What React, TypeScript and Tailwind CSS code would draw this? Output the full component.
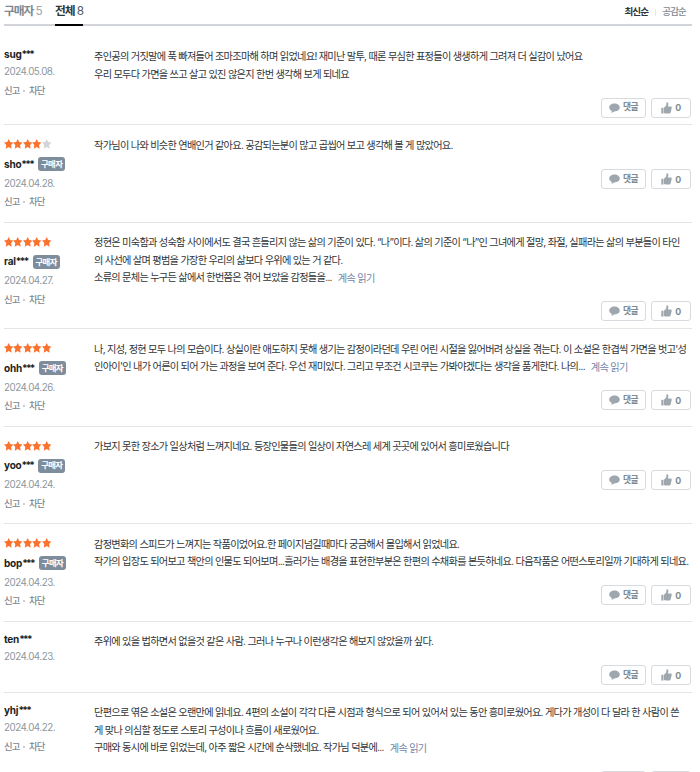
import clsx from "clsx";

interface Review {
  id: string;
  date: string;
  rating?: number;
  buyer?: boolean;
  reportable?: boolean;
  lines: string[];
  truncated?: boolean;
}

const REVIEWS: Review[] = [
  {
    id: "sug", date: "2024.05.08.", reportable: true,
    lines: [
      "주인공의 거짓말에 푹 빠져들어 조마조마해 하며 읽었네요! 재미난 말투, 때론 무심한 표정들이 생생하게 그려져 더 실감이 났어요",
      "우리 모두다 가면을 쓰고 살고 있진 않은지 한번 생각해 보게 되네요",
    ],
  },
  {
    id: "sho", date: "2024.04.28.", rating: 4, buyer: true, reportable: true,
    lines: ["작가님이 나와 비슷한 연배인거 같아요. 공감되는분이 많고 곱씹어 보고 생각해 볼 게 많았어요."],
  },
  {
    id: "ral", date: "2024.04.27.", rating: 5, buyer: true, reportable: true, truncated: true,
    lines: [
      "정현은 미숙함과 성숙함 사이에서도 결국 흔들리지 않는 삶의 기준이 있다. “나”이다. 삶의 기준이 “나”인 그녀에게 절망, 좌절, 실패라는 삶의 부분들이 타인",
      "의 사선에 살며 평범을 가장한 우리의 삶보다 우위에 있는 거 같다.",
      "소류의 문체는 누구든 삶에서 한번쯤은 겪어 보았을 감정들을...",
    ],
  },
  {
    id: "ohh", date: "2024.04.26.", rating: 5, buyer: true, reportable: true, truncated: true,
    lines: [
      "나, 지성, 정현 모두 나의 모습이다. 상실이란 애도하지 못해 생기는 감정이라던데 우린 어린 시절을 잃어버려 상실을 겪는다. 이 소설은 한겹씩 가면을 벗고'성",
      "인아이'인 내가 어른이 되어 가는 과정을 보여 준다. 우선 재미있다. 그리고 무조건 시코쿠는 가봐야겠다는 생각을 품게한다. 나의...",
    ],
  },
  {
    id: "yoo", date: "2024.04.24.", rating: 5, buyer: true, reportable: true,
    lines: ["가보지 못한 장소가 일상처럼 느껴지네요. 등장인물들의 일상이 자연스레 세계 곳곳에 있어서 흥미로웠습니다"],
  },
  {
    id: "bop", date: "2024.04.23.", rating: 5, buyer: true, reportable: true,
    lines: [
      "감정변화의 스피드가 느껴지는 작품이었어요.한 페이지넘길때마다 궁금해서 몰입해서 읽었네요.",
      "작가의 입장도 되어보고 책안의 인물도 되어보며...흘러가는 배경을 표현한부분은 한편의 수채화를 본듯하네요. 다음작품은 어떤스토리일까 기대하게 되네요.",
    ],
  },
  {
    id: "ten", date: "2024.04.23.",
    lines: ["주위에 있을 법하면서 없을것 같은 사람. 그러나 누구나 이런생각은 해보지 않았을까 싶다."],
  },
  {
    id: "yhj", date: "2024.04.22.", reportable: true, truncated: true,
    lines: [
      "단편으로 엮은 소설은 오랜만에 읽네요. 4편의 소설이 각각 다른 시점과 형식으로 되어 있어서 있는 동안 흥미로웠어요. 게다가 개성이 다 달라 한 사람이 쓴",
      "게 맞나 의심할 정도로 스토리 구성이나 흐름이 새로웠어요.",
      "구매와 동시에 바로 읽었는데, 아주 짧은 시간에 순삭했네요. 작가님 덕분에...",
    ],
  },
];

function Stars({ rating }: { rating: number }) {
  return (
    <div className="flex h-[15px] items-center">
      {[1, 2, 3, 4, 5].map((n) => (
        <svg key={n} width="9.4" height="10" viewBox="0 0 24 24" preserveAspectRatio="none"
          className={clsx("shrink-0", n <= rating ? "fill-[#fa722e]" : "fill-[#d1d5d9]")}>
          <path d="M12 0l3.8 7.3 8.2 1.3-5.9 5.9 1.4 8.7L12 19.4l-7.5 3.8 1.4-8.7L0 8.6l8.2-1.3z" />
        </svg>
      ))}
    </div>
  );
}

function CommentIcon() {
  return (
    <svg width="11" height="10" viewBox="0 0 11 10" className="fill-[#9ea7ad]">
      <path d="M5.5.5C2.5.5.2 2.2.2 4.5c0 1.4 1 2.7 2.6 3.4L2.6 9.900l2.5-1.500h.4c3 0 5.300-1.700 5.300-3.900S8.500.5 5.500.5z" />
    </svg>
  );
}

function ThumbIcon() {
  return (
    <svg width="11" height="12" viewBox="0 0 11 12" className="fill-[#9ea7ad]">
      <path d="M.3 5.8h2.2v5.7H.3z" />
      <path d="M3 5.8 5.2 3.5 5.5.6c.1-.5 1.9-.3 1.900 1.400L6.900 4.600h2.800c.8 0 1.200.6 1 1.300l-1.100 4.500c-.2.7-.6 1.100-1.300 1.100H4.500L3 10.900z" />
    </svg>
  );
}

function ReviewRow({ review }: { review: Review }) {
  const { id, date, rating, buyer, reportable, lines, truncated } = review;

  return (
    <li className={clsx("flex border-b border-[#e3e5e8] pt-[11.4px]", rating ? "min-h-[97.5px] pb-[7px]" : "pb-[6.55px]")}>
      <div className="w-[90px] shrink-0">
        {rating && <Stars rating={rating} />}
        <div className={clsx("flex items-center", rating ? "h-[25px]" : "-mt-px h-[15px]")}>
          <span className="text-[10px] font-bold tracking-[-0.2px] text-[#1c1f22]">
            {id}<span className="tracking-[-1.7px]">***</span>
          </span>
          {buyer && (
            <span className="ml-[5px] flex h-[14px] items-center rounded-[3px] bg-[#7e8d9c] px-[3px] text-[8.4px] font-bold tracking-[-0.65px] text-white">
              구매자
            </span>
          )}
        </div>
        <div className={clsx("flex items-center text-[9.8px] tracking-[-0.48px] text-[#8d979f]", rating ? "h-[15px]" : "h-5")}>{date}</div>
        {reportable && (
          <div className={clsx("flex items-center text-[9.4px] font-medium tracking-[-0.9px] text-[#808991]", rating ? "h-[21px]" : "h-[17px]")}>
            신고
            <i className="mr-[3.5px] ml-[4px] size-[2px] bg-[#c9ced3]" />
            차단
          </div>
        )}
      </div>

      <div className="min-w-0 flex-1">
        <div className="text-[10.2px] leading-[17.3px] tracking-[-0.725px] text-[#303538]">
          {lines.map((line, i) => (
            <p key={line} className="h-[17.3px] whitespace-nowrap">
              {line}
              {truncated && i === lines.length - 1 && (
                <span className="relative top-px ml-[6px] text-[#7285a6]">계속 읽기</span>
              )}
            </p>
          ))}
        </div>
        <div className="mt-[15px] flex justify-end gap-[5px] pr-px text-[8.8px] font-bold tracking-[-0.5px] text-[#808991]">
          <button className="flex h-5 w-[45px] items-center justify-center gap-[3px] rounded-[3px] border border-[#d7dade]">
            <CommentIcon />
            <span className="leading-none">댓글</span>
          </button>
          <button className="flex h-5 w-10 items-center justify-center gap-[3px] rounded-[3px] border border-[#d7dade]">
            <ThumbIcon />0
          </button>
        </div>
      </div>
    </li>
  );
}

export default function App() {
  return (
    <div className="h-[772px] overflow-hidden bg-white pr-2 pl-1 font-['Inter','Noto_Sans_CJK_KR',sans-serif]">
      <header className="flex h-[26px] items-start justify-between border-b-2 border-[#d1d5d9]">
        <nav className="flex gap-[13px] text-[11.8px] leading-[23px] tracking-[-1.1px]">
          <a className="h-[26px] w-[38px] whitespace-nowrap text-[#9ea7ad]"><b className="font-bold text-[#808991]">구매자</b>{" "}<span>5</span></a>
          <a className="h-[26px] w-7 border-b-2 border-black whitespace-nowrap text-[#525a61]"><b className="font-bold text-[#303538]">전체</b>{" "}<span>8</span></a>
        </nav>
        <div className="flex items-center pr-[6px] text-[9.6px] leading-6 font-bold tracking-[-0.9px]">
          <span className="text-[#303538]">최신순</span>
          <i className="mr-[6px] ml-[7px] h-[7px] w-px bg-[#e6e8eb]" />
          <span className="font-medium text-[#808991]">공감순</span>
        </div>
      </header>

      <ul className="pt-[10.9px]">
        {REVIEWS.map((review) => (
          <ReviewRow key={review.id} review={review} />
        ))}
      </ul>
    </div>
  );
}
